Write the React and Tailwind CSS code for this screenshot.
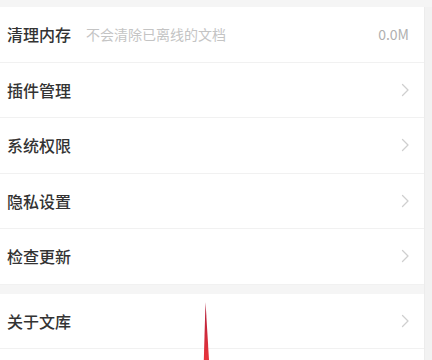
import React from 'react';

const groups = [
  [
    { title: '清理内存', hint: '不会清除已离线的文档', value: '0.0M' },
    { title: '插件管理' },
    { title: '系统权限' },
    { title: '隐私设置' },
    { title: '检查更新' },
  ],
  [{ title: '关于文库' }, { title: '' }],
];

const Chevron = () => (
  <svg width="9" height="14" viewBox="0 0 9 14" fill="none" className="shrink-0">
    <path d="M1.5 1.5L7 7L1.5 12.5" stroke="#cfcfcf" strokeWidth="1.3" strokeLinecap="round" strokeLinejoin="round" />
  </svg>
);

const Row = ({ item }) => (
  <div className="flex items-center h-[55.5px] pl-[7px] pr-[14px] border-b border-[#f1f1f1]">
    <span className="text-[16px] text-[#333333] font-medium">{item.title}</span>
    {item.hint && <span className="ml-[15px] text-[14px] text-[#c4c4c4]">{item.hint}</span>}
    <div className="flex-1" />
    {item.value ? (
      <span className="text-[14px] text-[#b0b0b0] mr-[1px]">{item.value}</span>
    ) : (
      item.title && <Chevron />
    )}
  </div>
);

export default function App() {
  return (
    <div
      className="relative w-[432px] h-[360px] overflow-hidden bg-[#f5f5f5]"
      style={{ fontFamily: '"Noto Sans CJK SC", "Noto Sans", sans-serif' }}
    >
      <div className="flex pt-[7px] h-full">
        <div className="w-[424px] flex flex-col gap-[9px]">
          {groups.map((g, i) => (
            <div key={i} className="bg-white">
              {g.map((item, j) => (
                <Row key={j} item={item} />
              ))}
            </div>
          ))}
        </div>
        <div className="flex-1 bg-[#f2f2f2] border-l border-[#ececec]" />
      </div>

      {/* red annotation arrow */}
      <svg className="absolute left-0 top-0" width="432" height="360" viewBox="0 0 432 360">
        <defs>
          <linearGradient id="arrow" x1="0" y1="0" x2="0" y2="1">
            <stop offset="0" stopColor="#b01e3a" />
            <stop offset="1" stopColor="#e8343c" />
          </linearGradient>
        </defs>
        <polygon points="205.5,302 203.8,360 209,360" fill="url(#arrow)" />
      </svg>
    </div>
  );
}
